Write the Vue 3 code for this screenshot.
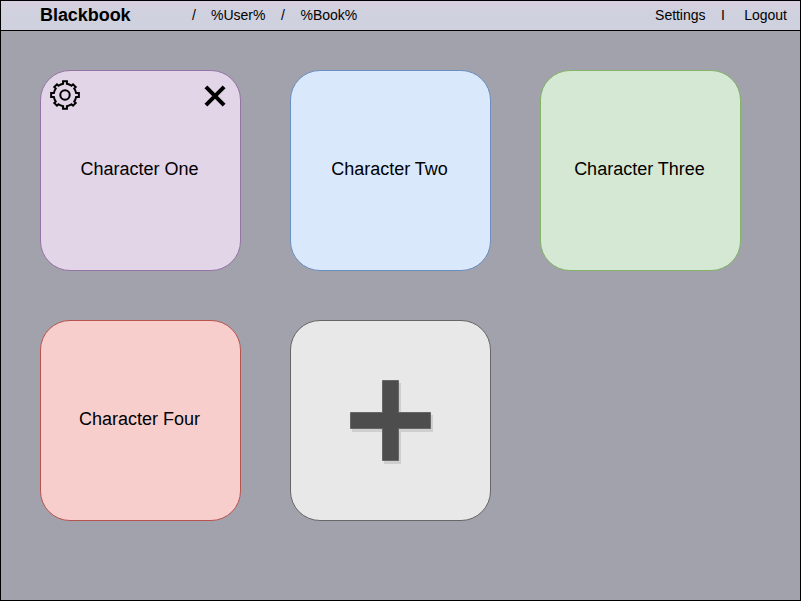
<script setup>
const characters = [
  { name: 'Character One', tone: 'purple', tools: true },
  { name: 'Character Two', tone: 'blue' },
  { name: 'Character Three', tone: 'green' },
  { name: 'Character Four', tone: 'red' },
]
// Gear outline: eight square teeth, the diagonal ones shorter, joined by arcs of the round body
const teeth = 8
const at = (r, a) => `${(15 + r * Math.sin(a)).toFixed(2)} ${(15 - r * Math.cos(a)).toFixed(2)}`
let gear = ''
for (let i = 0; i < teeth; i++) {
  const c = (i * 2 * Math.PI) / teeth
  const tip = i % 2 ? 13.4 : 14
  const start = at(11.3, c - 0.17)
  gear += i === 0 ? `M${start}` : `A11.3 11.3 0 0 1 ${start}`
  gear += `L${at(tip, c - 0.14)}L${at(tip, c + 0.14)}L${at(11.3, c + 0.17)}`
}
gear += `A11.3 11.3 0 0 1 ${at(11.3, -0.17)}Z`
</script>

<template>
  <div class="app">
    <header class="bar">
      <strong class="brand">Blackbook</strong>
      <nav class="crumbs">
        <span class="sep">/</span><span class="user">%User%</span>
        <span class="sep">/</span><span class="book">%Book%</span>
      </nav>
      <nav class="account">
        <span class="settings">Settings</span><span class="pipe">I</span><span>Logout</span>
      </nav>
    </header>
    <main class="grid">
      <article v-for="c in characters" :key="c.name" class="card" :class="c.tone">
        <div v-if="c.tools" class="tools">
          <svg width="30" height="30" viewBox="0 0 30 30" fill="none" stroke="#000" stroke-width="2">
            <path :d="gear" />
            <circle cx="15" cy="15" r="4.7" />
          </svg>
          <svg class="close" width="22" height="22" viewBox="0 0 22 22" stroke="#000" stroke-width="4">
            <path d="M1.9 1.9L20.1 20.1M20.1 1.9L1.9 20.1" />
          </svg>
        </div>
        <span class="name">{{ c.name }}</span>
      </article>
      <article class="card add">
        <svg class="plus" width="84" height="85" viewBox="0 0 84 85">
          <path transform="translate(2 3)" fill="#cfcfcf" d="M32 0H49V32H81V49H49V81H32V49H0V32H32Z" />
          <path fill="#4d4d4d" stroke="#666" d="M32.5 .5H48.5V32.5H80.5V48.5H48.5V80.5H32.5V48.5H.5V32.5H32.5Z" />
        </svg>
      </article>
    </main>
  </div>
</template>

<style scoped>
.app {
  box-sizing: border-box;
  width: 801px;
  height: 601px;
  border: 1px solid #000;
  background: #a2a2ac;
  color: #000;
  font-family: "Liberation Sans", Arial, sans-serif;
}
.bar {
  box-sizing: border-box;
  height: 30px;
  padding: 0 13px 1px 39px;
  border-bottom: 1px solid #000;
  background: linear-gradient(#d7cfe1, #d0d1df 40%, #d0d1df);
  display: flex;
  align-items: center;
  font-size: 14px;
  white-space: nowrap;
}
.brand { width: 152px; font-size: 18px; line-height: 20px; letter-spacing: -.05px; }
.crumbs { display: flex; }
.sep { width: 19px; }
.user { width: 70px; }
.book { padding-left: .5px; }
.account { margin-left: auto; display: flex; }
.settings { letter-spacing: -.04px; }
.pipe { width: 4px; margin: 0 19.3px 0 15.5px; }
.grid {
  display: grid;
  grid-template-columns: repeat(3, 201px);
  grid-auto-rows: 201px;
  gap: 49px;
  padding: 39px;
}
.card {
  position: relative;
  box-sizing: border-box;
  border: 1px solid;
  border-radius: 30px;
  display: flex;
  align-items: center;
  justify-content: center;
}
.purple { background: #e1d5e7; border-color: #9673a6; }
.blue { background: #dae8fc; border-color: #6c8ebf; }
.green { background: #d5e8d4; border-color: #82b366; }
.red { background: #f8cecc; border-color: #b85450; }
.add { background: #e8e8e8; border-color: #666; }
.name { font-size: 18px; line-height: 22px; padding-bottom: 4px; margin-left: -2px; }
.tools {
  position: absolute;
  top: 9px;
  left: 9px;
  right: 14px;
  display: flex;
  justify-content: space-between;
}
.close { margin-top: 5px; }
.plus { display: block; margin: 3px 0 0 3px; }
</style>
